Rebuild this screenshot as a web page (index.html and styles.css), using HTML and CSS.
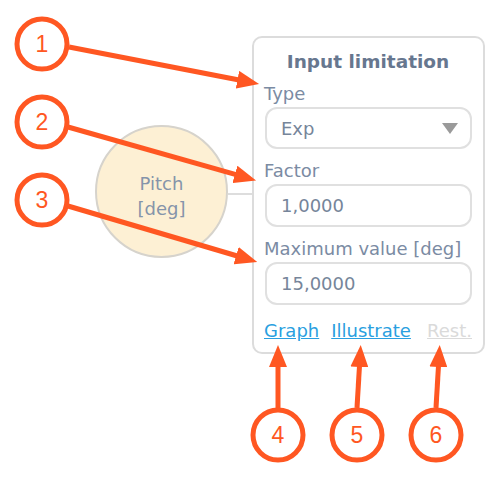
FILE: index.html
```html
<!DOCTYPE html>
<html lang="en">
<head>
    <meta charset="utf-8" />
    <title>Input limitation</title>
    <link rel="stylesheet" href="styles.css">
</head>
<body>
	<div class="scene">
		<div class="node"><span>Pitch<br/>[deg]</span></div>
		<div class="wire"></div>
		<div class="panel">
			<h2>Input limitation</h2>
			<div class="label">Type</div>
			<div class="box select">Exp<span class="caret"></span></div>
			<div class="label">Factor</div>
			<div class="box">1,0000</div>
			<div class="label">Maximum value [deg]</div>
			<div class="box">15,0000</div>
			<div class="links">
				<a href="#">Graph</a>
				<a href="#">Illustrate</a>
				<a href="#" class="off">Rest.</a>
			</div>
		</div>
	</div>

	<!-- numbered callouts drawn over the panel -->
	<svg class="callouts" width="501" height="479" viewBox="0 0 501 479">
		<defs>
			<marker id="head" markerUnits="userSpaceOnUse" markerWidth="22" markerHeight="18" refX="3" refY="9" orient="auto">
				<path d="M0,0 L22,9 L0,18 z" fill="#ff5722"/>
			</marker>
		</defs>
		<g stroke="#ff5722" stroke-width="5" fill="none">
			<line x1="69" y1="47" x2="240.4" y2="80.3" marker-end="url(#head)"/>
			<line x1="68" y1="127" x2="237.8" y2="175.2" marker-end="url(#head)"/>
			<line x1="68" y1="206" x2="239" y2="256.5" marker-end="url(#head)"/>
			<line x1="278" y1="408" x2="278" y2="364" marker-end="url(#head)"/>
			<line x1="357" y1="408" x2="359.6" y2="364" marker-end="url(#head)"/>
			<line x1="436" y1="408" x2="438.6" y2="364" marker-end="url(#head)"/>
			<circle cx="42" cy="44" r="25" fill="#fff"/>
			<circle cx="42" cy="122" r="25" fill="#fff"/>
			<circle cx="42" cy="200" r="25" fill="#fff"/>
			<circle cx="278" cy="435" r="25" fill="#fff"/>
			<circle cx="357" cy="435" r="25" fill="#fff"/>
			<circle cx="436" cy="435" r="25" fill="#fff"/>
		</g>
		<g class="nums">
			<text x="42" y="52">1</text>
			<text x="42" y="130">2</text>
			<text x="42" y="208">3</text>
			<text x="278" y="443">4</text>
			<text x="357" y="443">5</text>
			<text x="436" y="443">6</text>
		</g>
	</svg>
</body>
</html>
```

FILE: styles.css
```css
body
{
	margin: 0;
	background-color: white;
	font-family: "DejaVu Sans", Verdana, sans-serif;
	position: relative;
	width: 501px;
	height: 479px;
	overflow: hidden;
}

.scene
{
	display: flex;
	align-items: flex-start;
	padding: 36px 0 0 95px;
}

.node
{
	box-sizing: border-box;
	width: 133px;
	height: 133px;
	margin-top: 89px;
	padding-top: 9px;
	border: 2px solid #d6d3cc;
	border-radius: 50%;
	background-color: #fdf0d4;
	display: flex;
	align-items: center;
	justify-content: center;
	text-align: center;
	color: #8594aa;
	font-size: 18px;
	line-height: 25px;
}

.wire
{
	width: 24px;
	height: 2px;
	margin-top: 157px;
	background-color: #dddddd;
}

.panel
{
	box-sizing: border-box;
	width: 233px;
	border: 2px solid #dcdcdc;
	border-radius: 10px;
	padding: 13px 11px 10px 10px;
	background-color: white;
}

h2
{
	margin: 0 0 10px 0;
	text-align: center;
	font-size: 18.5px;
	line-height: 22px;
	color: #67778f;
}

.label
{
	font-size: 18px;
	line-height: 22px;
	color: #7b8ba3;
	margin: 0 0 2px 0;
}

.box
{
	box-sizing: border-box;
	height: 43px;
	margin: 0 0 11px 1px;
	padding: 0 12px 0 14px;
	border: 2px solid #e0e0e0;
	border-radius: 12px;
	display: flex;
	align-items: center;
	font-size: 18px;
	color: #76859a;
}

.select
{
	height: 42px;
	justify-content: space-between;
}

.caret
{
	width: 0;
	height: 0;
	border-left: 8px solid transparent;
	border-right: 8px solid transparent;
	border-top: 11px solid #9a9a9a;
}

.links
{
	display: flex;
	gap: 12px;
	margin-top: 15px;
	font-size: 18px;
	line-height: 22px;
}

.links a
{
	color: #2a9fe0;
}

.links a.off
{
	margin-left: auto;
	color: #dadada;
}

.callouts
{
	position: absolute;
	top: 0;
	left: 0;
	pointer-events: none;
}

.nums text
{
	fill: #ff5722;
	font-family: "Liberation Sans", Arial, sans-serif;
	font-size: 23px;
	text-anchor: middle;
}
```
